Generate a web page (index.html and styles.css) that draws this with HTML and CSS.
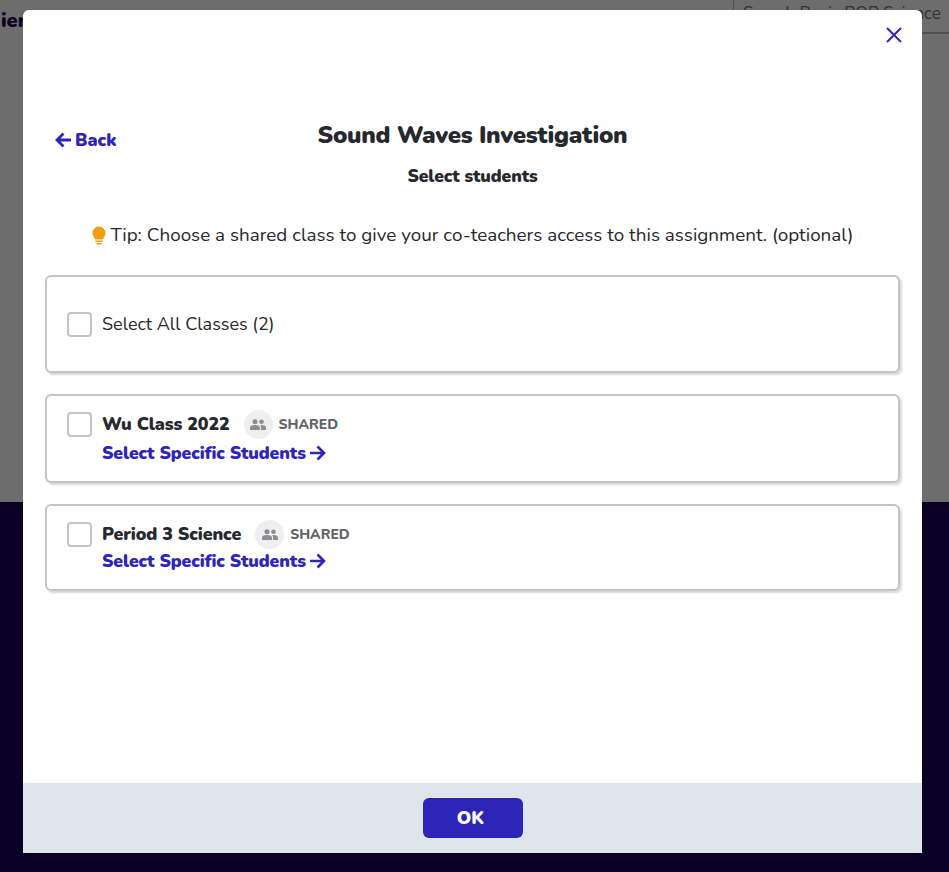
FILE: index.html
```html
<!DOCTYPE html>
<html lang="en">
<head>
<meta charset="utf-8">
<title>Select students</title>
<link rel="stylesheet" href="styles.css">
</head>
<body>
<div class="backdrop">
  <div class="page-top">
    <div class="page-title">ien</div>
    <div class="page-search">Search Basic POP Science</div>
  </div>
  <div class="page-bottom"></div>
</div>
<div class="modal">
  <div class="modal-body">
    <div class="close-row">
      <button class="close" aria-label="Close">
        <svg width="18" height="18" viewBox="0 0 18 18"><path d="M2 2l14 14M16 2L2 16" fill="none" stroke="#2d25b8" stroke-width="2"/></svg>
      </button>
    </div>
    <div class="header">
      <a class="back">
        <svg width="17" height="16" viewBox="0 0 17 16"><path d="M16 8H2M8.500 1.500L2 8l6.500 6.500" fill="none" stroke="#2d25b8" stroke-width="2.800"/></svg>
        Back
      </a>
      <h1>Sound Waves Investigation</h1>
      <h2>Select students</h2>
    </div>
    <p class="tip">
      <svg width="14" height="19" viewBox="0 0 14 19"><path d="M7 0.500a6.500 6.500 0 0 1 6.500 6.500c0 2.600-1.700 4-2.500 6.500H3C2.200 11 .5 9.600.5 7A6.500 6.500 0 0 1 7 .5z" fill="#f39c12"/><rect x="3.300" y="14.500" width="7.400" height="1.500" fill="#f39c12"/><path d="M4 17h6l-1 1.500H5z" fill="#f39c12"/></svg>
      Tip: Choose a shared class to give your co-teachers access to this assignment. (optional)
    </p>
    <div class="cards">
      <label class="card card-all">
        <span class="check"></span>
        <span class="all-label">Select All Classes (2)</span>
      </label>
      <div class="card">
        <div class="class-row">
          <span class="check"></span>
          <span class="class-name">Wu Class 2022</span>
          <span class="people"><svg width="16" height="11" viewBox="0 0 16 11"><circle cx="5" cy="2.800" r="2.500" fill="#8a8d93"/><circle cx="11.500" cy="2.800" r="2.300" fill="#8a8d93"/><path d="M0 11V8.500C0 6.800 2.500 6 5 6s5 .8 5 2.500V11zM11 11V8c0-.8-.3-1.400-.8-2 .4-.1.800-.1 1.300-.1 2.200 0 4.500.8 4.500 2.500V11z" fill="#8a8d93"/></svg></span>
          <span class="shared">SHARED</span>
        </div>
        <a class="specific">Select Specific Students
          <svg width="17" height="16" viewBox="0 0 17 16"><path d="M1 8h14M8.500 1.500L15 8l-6.500 6.500" fill="none" stroke="#2d25b8" stroke-width="2.600"/></svg>
        </a>
      </div>
      <div class="card">
        <div class="class-row">
          <span class="check"></span>
          <span class="class-name">Period 3 Science</span>
          <span class="people"><svg width="16" height="11" viewBox="0 0 16 11"><circle cx="5" cy="2.800" r="2.500" fill="#8a8d93"/><circle cx="11.500" cy="2.800" r="2.300" fill="#8a8d93"/><path d="M0 11V8.500C0 6.800 2.500 6 5 6s5 .8 5 2.500V11zM11 11V8c0-.8-.3-1.400-.8-2 .4-.1.800-.1 1.300-.1 2.200 0 4.500.8 4.500 2.500V11z" fill="#8a8d93"/></svg></span>
          <span class="shared">SHARED</span>
        </div>
        <a class="specific specific-tight">Select Specific Students
          <svg width="17" height="16" viewBox="0 0 17 16"><path d="M1 8h14M8.500 1.500L15 8l-6.500 6.500" fill="none" stroke="#2d25b8" stroke-width="2.600"/></svg>
        </a>
      </div>
    </div>
  </div>
  <div class="modal-footer">
    <button class="ok">OK</button>
  </div>
</div>
</body>
</html>
```

FILE: styles.css
```css
* { box-sizing: border-box; }
html, body { margin: 0; height: 100%; }
body {
  font-family: "Nunito", "Lato", "Noto Sans", sans-serif;
  color: #25282d;
  overflow: hidden;
}
.backdrop {
  height: 872px;
  display: flex;
  flex-direction: column;
}
.page-top {
  height: 502px;
  background: #6d6d6d;
  display: flex;
  justify-content: space-between;
  align-items: flex-start;
}
.page-title {
  margin: 7px 0 0 1px;
  font-weight: 900;
  font-size: 20px;
  line-height: 28px;
  white-space: nowrap;
  color: #0a0024;
}
.page-search {
  width: 216px;
  height: 34px;
  border-left: 1px solid #505050;
  border-bottom: 2px solid #505050;
  padding: 3px 0 0 9px;
  font-size: 17px;
  line-height: 22px;
  color: #333;
  white-space: nowrap;
  overflow: hidden;
}
.page-bottom { flex: 1; background: #0a0024; }
.modal {
  position: absolute;
  left: 23px;
  top: 10px;
  width: 899px;
  height: 843px;
  background: #fff;
  border-radius: 6px 6px 0 0;
  display: flex;
  flex-direction: column;
}
.modal-body { flex: 1; padding: 0 22px; }
.close-row { display: flex; justify-content: flex-end; padding: 16px 0 0; height: 50px; }
.close { border: 0; background: none; padding: 0; margin-right: -3px; height: 18px; }
.close svg { display: block; }
.header { position: relative; text-align: center; padding-top: 60px; height: 162px; }
.back {
  position: absolute;
  left: 10px;
  top: 69px;
  display: flex;
  align-items: center;
  gap: 3px;
  color: #2d25b8;
  font-weight: 900;
  font-size: 17.800px;
  line-height: 22px;
}
h1 { margin: 0; font-size: 24px; line-height: 30px; font-weight: 900; letter-spacing: -0.28px; }
h2 { margin: 15px 0 0; font-size: 17.500px; line-height: 22px; font-weight: 900; letter-spacing: -0.1px; }
.tip {
  margin: 0;
  height: 53px;
  padding-top: 1px;
  text-align: center;
  font-size: 18.850px;
  line-height: 24px;
  white-space: nowrap;
}
.tip svg { vertical-align: -4px; }
.cards { display: flex; flex-direction: column; gap: 21px; }
.card {
  display: block;
  width: 855px;
  height: 89px;
  border: 2px solid #c4c4c4;
  border-radius: 6px;
  box-shadow: 2px 2px 2px #d9d9d9;
  padding: 15px 20px;
}
.card:last-child { height: 87px; }
.card-all {
  height: 98px;
  display: flex;
  align-items: center;
  gap: 10px;
}
.check {
  width: 25px;
  height: 25px;
  flex: none;
  border: 2px solid #c4c4c4;
  border-radius: 4px;
  background: #fff;
}
.all-label { font-size: 18px; }
.class-row { display: flex; align-items: center; height: 26px; }
.class-name { margin-left: 10px; font-size: 17.800px; font-weight: 900; letter-spacing: -0.1px; }
.people {
  width: 29px;
  height: 29px;
  margin-left: 14px;
  border-radius: 50%;
  background: #efefef;
  display: flex;
  align-items: center;
  justify-content: center;
}
.shared { margin-left: 6px; font-size: 14px; font-weight: 800; color: #5f6266; }
.specific {
  margin: 5px 0 0 35px;
  display: flex;
  align-items: center;
  gap: 3px;
  color: #2d25b8;
  font-size: 17.600px;
  line-height: 22px;
  font-weight: 900;
  letter-spacing: -0.1px;
}
.specific-tight { margin-top: 3px; }
.modal-footer {
  height: 70px;
  background: #dfe5ec;
  display: flex;
  align-items: center;
  justify-content: center;
}
.ok {
  width: 100px;
  height: 40px;
  border: 0;
  border-radius: 6px;
  background: #2d25b8;
  color: #fff;
  font-family: inherit;
  font-size: 18px;
  font-weight: 900;
  padding: 0 4px 0 0;
}
```
